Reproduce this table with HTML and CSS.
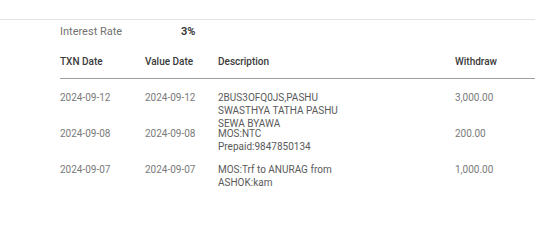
FILE: index.html
```html
<!DOCTYPE html>
<html>
<head>
<meta charset="utf-8">
<link rel="stylesheet" href="styles.css">
</head>
<body>
<div class="topbar"></div>
<div class="rate">
  <span class="rate-label">Interest Rate</span>
  <span class="rate-value">3%</span>
</div>
<div class="table">
  <div class="row head">
    <div>TXN Date</div>
    <div>Value Date</div>
    <div>Description</div>
    <div>Withdraw</div>
  </div>
  <div class="rows">
    <div class="row">
      <div class="date">2024-09-12</div>
      <div class="date">2024-09-12</div>
      <div class="desc">2BUS3OFQ0JS,PASHU SWASTHYA TATHA PASHU SEWA BYAWA</div>
      <div class="amt">3,000.00</div>
    </div>
    <div class="row">
      <div class="date">2024-09-08</div>
      <div class="date">2024-09-08</div>
      <div class="desc">MOS:NTC Prepaid:9847850134</div>
      <div class="amt">200.00</div>
    </div>
    <div class="row">
      <div class="date">2024-09-07</div>
      <div class="date">2024-09-07</div>
      <div class="desc">MOS:Trf to ANURAG from ASHOK:kam</div>
      <div class="amt">1,000.00</div>
    </div>
  </div>
</div>
</body>
</html>
```
FILE: styles.css
```css
html, body {
  margin: 0;
  padding: 0;
  background: #ffffff;
  overflow: hidden;
}
body {
  font-family: Roboto, "Liberation Sans", sans-serif;
  width: 535px;
  height: 244px;
}
.topbar {
  height: 19px;
  border-bottom: 1px solid #e2e2e2;
}
.rate {
  display: flex;
  padding: 5px 0 0 60px;
  font-size: 11px;
  line-height: 14px;
}
.rate-label {
  width: 121px;
  color: #727272;
}
.rate-value {
  color: #3a3a3a;
  font-weight: 700;
}
.table {
  margin: 16px 0 0 60px;
  width: 475px;
}
.row {
  display: grid;
  grid-template-columns: 85px 73px 237px 80px;
  align-items: start;
  font-size: 10px;
  line-height: 13px;
}
.head {
  color: #3a3a3a;
  font-weight: 500;
  padding-bottom: 10px;
  border-bottom: 1px solid #a0a0a0;
}
.rows {
  padding-top: 12px;
}
.rows .row {
  height: 36px;
}
.date, .amt {
  color: #7a7a7a;
}
.desc {
  color: #5a5a5a;
  width: 125px;
}
```
